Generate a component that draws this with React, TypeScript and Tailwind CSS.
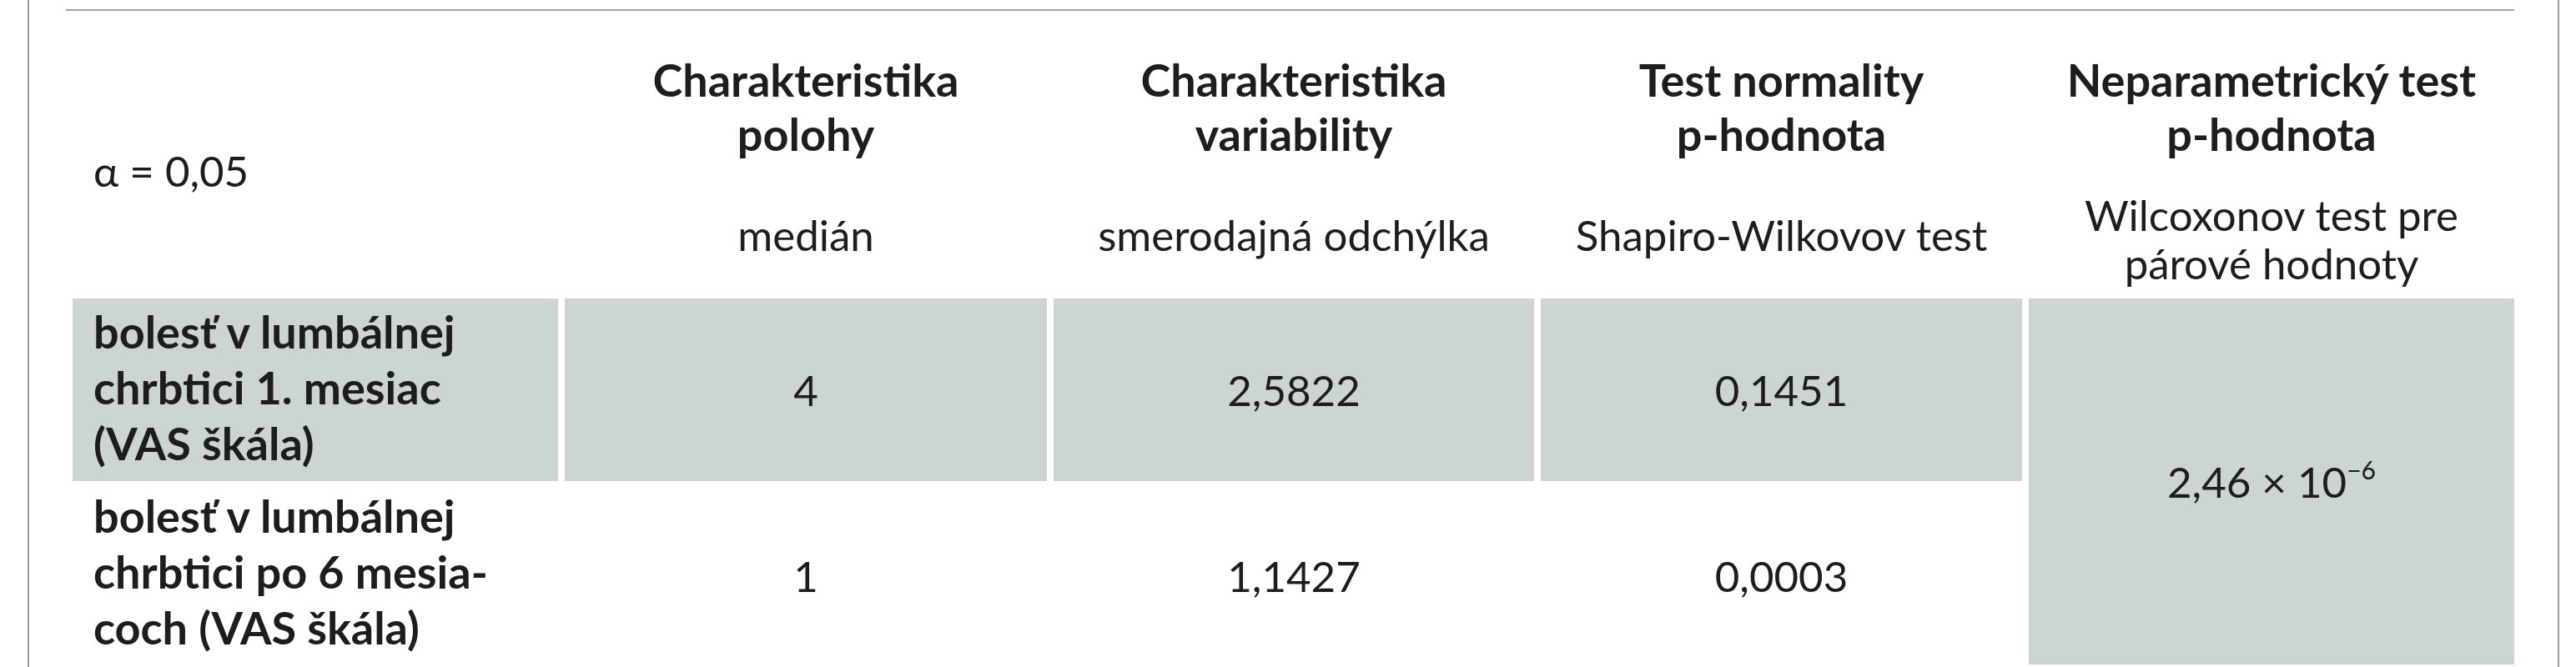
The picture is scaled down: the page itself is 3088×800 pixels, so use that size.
export default function App() {
  const gray = "bg-[#ccd5d3]";
  return (
    <div className="w-[3088px] h-[800px] bg-white flex text-[#1d1d1b] font-['Lato',sans-serif] overflow-hidden">
      <div className="ml-[33px] w-[3035px] h-full border-x-2 border-[#9b9b9b] pt-[11px] flex flex-col">
        <div className="ml-[44px] mr-[52px] h-[2px] bg-[#a3a3a3]" />
        <div className="ml-[52px] mr-[52px] grid grid-cols-[582px_578px_576px_577px_582px] grid-rows-[337px_219px_212px] gap-x-[8px] gap-y-[8px] whitespace-nowrap">
          {/* header */}
          <div className="pl-[25px] pt-[163px] text-[51px] leading-[58px]">α = 0,05</div>
          <div className="flex flex-col items-center text-center pt-[50px]">
            <div className="font-bold text-[54px] leading-[65px]">
              <div>Charakteristika</div>
              <div>polohy</div>
            </div>
            <div className="mt-[60px] text-[51px] leading-[58px]">medián</div>
          </div>
          <div className="flex flex-col items-center text-center pt-[50px]">
            <div className="font-bold text-[54px] leading-[65px]">
              <div>Charakteristika</div>
              <div>variability</div>
            </div>
            <div className="mt-[60px] text-[51px] leading-[58px]">smerodajná odchýlka</div>
          </div>
          <div className="flex flex-col items-center text-center pt-[50px]">
            <div className="font-bold text-[54px] leading-[65px]">
              <div>Test normality</div>
              <div>p-hodnota</div>
            </div>
            <div className="mt-[60px] text-[51px] leading-[58px]">Shapiro-Wilkovov test</div>
          </div>
          <div className="flex flex-col items-center text-center pt-[50px]">
            <div className="font-bold text-[54px] leading-[65px]">
              <div>Neparametrický test</div>
              <div>p-hodnota</div>
            </div>
            <div className="mt-[36px] text-[51px] leading-[58px]">
              <div>Wilcoxonov test pre</div>
              <div>párové hodnoty</div>
            </div>
          </div>

          {/* row 1 */}
          <div className={`${gray} pl-[25px] pt-[6px] font-bold text-[54px] leading-[67px]`}>
            <div>bolesť v lumbálnej</div>
            <div>chrbtici 1. mesiac</div>
            <div>(VAS škála)</div>
          </div>
          <div className={`${gray} flex items-center justify-center text-[51px] leading-[58px]`}>4</div>
          <div className={`${gray} flex items-center justify-center text-[51px] leading-[58px]`}>2,5822</div>
          <div className={`${gray} flex items-center justify-center text-[51px] leading-[58px]`}>0,1451</div>
          <div className={`${gray} row-span-2 flex items-center justify-center text-[51px] leading-[58px]`}>
            <span>
              2,46 × 10<sup className="text-[30px] relative -top-[4px] align-super leading-none">−6</sup>
            </span>
          </div>

          {/* row 2 */}
          <div className="pl-[25px] pt-[0px] font-bold text-[54px] leading-[67px]">
            <div>bolesť v lumbálnej</div>
            <div>chrbtici po 6 mesia-</div>
            <div>coch (VAS škála)</div>
          </div>
          <div className="flex items-center justify-center text-[51px] leading-[58px]">1</div>
          <div className="flex items-center justify-center text-[51px] leading-[58px]">1,1427</div>
          <div className="flex items-center justify-center text-[51px] leading-[58px]">0,0003</div>
        </div>
      </div>
    </div>
  );
}
